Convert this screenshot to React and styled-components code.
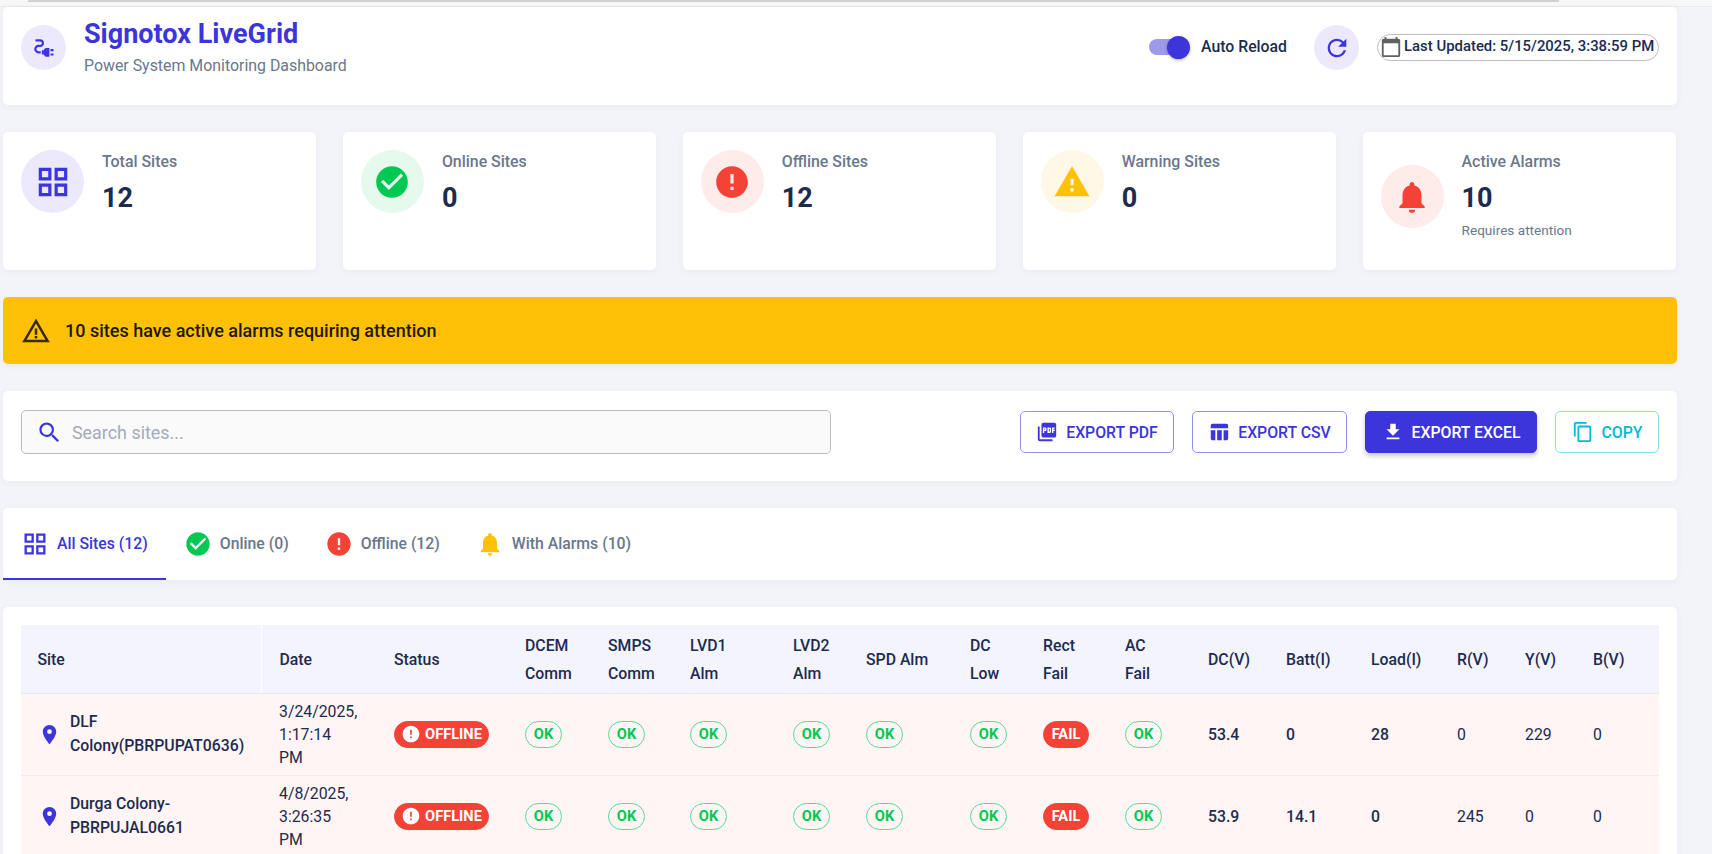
import React from 'react';
import styled, { createGlobalStyle } from 'styled-components';
import {
  MdElectricalServices, MdRefresh, MdCalendarToday, MdOutlineGridView, MdCheckCircle, MdError,
  MdWarning, MdNotifications, MdWarningAmber, MdSearch, MdPictureAsPdf, MdTableChart,
  MdFileDownload, MdContentCopy, MdLocationOn,
} from 'react-icons/md';

const primary = '#3c35dc';
const navy = '#1d2b4f';
const gray = '#6b778c';

const Global = createGlobalStyle`
  html, body { margin: 0; padding: 0; background: #f3f4f9; }
  * { box-sizing: border-box; }
  body { font-family: Roboto, "Liberation Sans", sans-serif; color: ${navy}; }
`;

const Page = styled.div`
  width: 1712px;
  height: 854px;
  overflow: hidden;
`;
const TopStrip = styled.div`
  height: 7px;
  background: #f7f7f7;
  border-bottom: 1px solid #e9e9e9;
  padding-left: 28px;
`;
const TopLine = styled.div`
  width: 1531px;
  height: 2px;
  background: #d2d2d2;
`;
const Content = styled.main`
  width: 1674px;
  margin-left: 3px;
  display: flex;
  flex-direction: column;
  gap: 27px;
`;
const Card = styled.section`
  background: #fff;
  border-radius: 5px;
  box-shadow: 0 2px 10px rgba(40, 50, 90, 0.04);
`;
const Header = styled(Card)`
  height: 98px;
  padding: 18px;
  display: flex;
  justify-content: space-between;
  align-items: flex-start;
`;
const Brand = styled.div`
  display: flex;
  align-items: flex-start;
  gap: 18px;
`;
const Round = styled.div`
  width: ${p => p.$size}px;
  height: ${p => p.$size}px;
  border-radius: 50%;
  flex: none;
  background: ${p => p.$bg};
  color: ${p => p.$fg};
  display: flex;
  align-items: center;
  justify-content: center;
`;
const Title = styled.h1`
  margin: -8px 0 0;
  font-size: 27px;
  line-height: 35px;
  font-weight: 700;
  color: ${primary};
`;
const Subtitle = styled.div`
  margin-top: 2px;
  font-size: 15.9px;
  line-height: 23px;
  color: ${gray};
`;
const Controls = styled.div`
  display: flex;
  align-items: center;
  height: 45px;
`;
const Switch = styled.div`
  position: relative;
  width: 38px;
  height: 16px;
  border-radius: 8px;
  background: #9e99ec;
  margin-right: 14px;
  margin-top: -1px;
`;
const Thumb = styled.div`
  position: absolute;
  right: -3px;
  top: -3.5px;
  width: 23px;
  height: 23px;
  border-radius: 50%;
  background: ${primary};
  box-shadow: 0 1px 3px rgba(0, 0, 0, 0.3);
`;
const SwitchLabel = styled.span`
  font-size: 15.8px;
  font-weight: 500;
  margin-right: 27px;
  margin-top: -2px;
`;
const UpdatedPill = styled.div`
  margin-left: 18px;
  width: 282px;
  height: 27px;
  margin-top: -1px;
  border: 1px solid #bdbdbd;
  border-radius: 14px;
  display: flex;
  align-items: center;
  gap: 2px;
  padding-left: 2px;
  color: #616161;
  overflow: visible;
`;
const UpdatedText = styled.span`
  font-size: 14.9px;
  font-weight: 500;
  color: ${navy};
  white-space: nowrap;
  margin-top: -2px;
`;
const StatGrid = styled.div`
  display: grid;
  grid-template-columns: repeat(5, 313.3px);
  gap: 26.6px;
`;
const StatCard = styled(Card)`
  height: 138px;
  padding: 18px;
  display: flex;
  align-items: flex-start;
`;
const StatRow = styled.div`
  display: flex;
  align-items: center;
  gap: 18px;
`;
const StatText = styled.div`
  display: flex;
  flex-direction: column;
  min-height: 63px;
`;
const StatLabel = styled.div`
  font-size: 15.9px;
  font-weight: 500;
  line-height: 23px;
  color: ${gray};
`;
const StatValue = styled.div`
  font-size: 27px;
  line-height: 30px;
  font-weight: 700;
  margin-top: 10px;
  color: ${navy};
`;
const StatNote = styled.div`
  font-size: 13.6px;
  line-height: 20px;
  margin: 7px 0 3px;
  color: ${gray};
`;
const Alert = styled.div`
  height: 67px;
  background: #ffc107;
  border-radius: 5px;
  padding-left: 18px;
  display: flex;
  align-items: center;
  gap: 14px;
  color: #3a2b00;
  box-shadow: 0 2px 6px rgba(40, 50, 90, 0.05);
`;
const AlertText = styled.span`
  font-size: 18px;
  font-weight: 500;
  margin-top: -1px;
  color: #1f1800;
`;
const Toolbar = styled(Card)`
  height: 90px;
  padding: 19px 18px;
  display: flex;
  justify-content: space-between;
  align-items: flex-start;
`;
const SearchBox = styled.div`
  width: 810px;
  height: 44px;
  border: 1px solid #bdbdbd;
  border-radius: 5px;
  background: #fafafa;
  display: flex;
  align-items: center;
  gap: 7px;
  padding-left: 14px;
  color: ${primary};
`;
const SearchInput = styled.input`
  border: 0;
  outline: 0;
  background: transparent;
  flex: 1;
  font: 400 17.9px Roboto, sans-serif;
  color: ${navy};
  &::placeholder { color: #a3abb9; opacity: 1; }
`;
const Actions = styled.div`
  display: flex;
  gap: 18px;
  margin-top: 1px;
`;
const ActionButton = styled.button`
  height: 42px;
  width: ${p => p.$w}px;
  border-radius: 5px;
  display: flex;
  align-items: center;
  justify-content: center;
  gap: 8px;
  padding: 0;
  font: 500 15.8px Roboto, sans-serif;
  text-transform: uppercase;
  background: ${p => (p.$filled ? primary : '#fff')};
  color: ${p => (p.$filled ? '#fff' : p.$color)};
  border: 1px solid ${p => (p.$filled ? primary : p.$border)};
  box-shadow: ${p => (p.$filled ? '0 3px 5px rgba(0,0,0,.22)' : 'none')};
`;
const TabsCard = styled(Card)`
  height: 72px;
  display: flex;
`;
const Tab = styled.div`
  height: 72px;
  padding: 1px 18px 0;
  display: flex;
  align-items: center;
  gap: 8px;
  font-size: 15.8px;
  font-weight: 500;
  color: ${p => (p.$active ? primary : gray)};
  border-bottom: 2px solid ${p => (p.$active ? primary : 'transparent')};
  white-space: nowrap;
`;
const TabIcon = styled.span`
  display: flex;
  color: ${p => p.$color};
`;
const TableCard = styled(Card)`
  padding: 18px;
  height: 300px;
`;
const Table = styled.table`
  width: 1638px;
  table-layout: fixed;
  border-collapse: collapse;
`;
const HeadCell = styled.th`
  background: #f3f4fd;
  height: 68px;
  padding: 2px 6px 0 18px;
  font-size: 15.8px;
  font-weight: 500;
  line-height: 27.5px;
  text-align: left;
  color: ${navy};
  white-space: pre-line;
  border-bottom: 1px solid #e9ebf2;
  &:first-child {
    padding-left: 16.5px;
    border-right: 1px solid #fff;
  }
`;
const Row = styled.tr`
  background: #fef5f4;
`;
const Cell = styled.td`
  height: 82px;
  padding: 0 6px 0 18px;
  font-size: 15.8px;
  line-height: 23px;
  font-weight: ${p => (p.$strong ? 500 : 400)};
  color: ${navy};
  border-bottom: 1px solid #eeeef2;
  white-space: pre-line;
`;
const SiteCell = styled.td`
  height: 82px;
  padding: 0 10px 0 17px;
  border-bottom: 1px solid #eeeef2;
`;
const SiteWrap = styled.div`
  display: flex;
  align-items: center;
  gap: 9px;
  color: ${primary};
`;
const SiteName = styled.span`
  font-size: 15.8px;
  line-height: 24.4px;
  font-weight: 500;
  color: ${navy};
`;
const Badge = styled.span`
  display: inline-flex;
  align-items: center;
  justify-content: center;
  vertical-align: middle;
  height: 27px;
  width: ${p => p.$w}px;
  border-radius: 13.5px;
  font-size: 14.6px;
  font-weight: 700;
  background: ${p => (p.$solid ? '#f44336' : 'transparent')};
  color: ${p => (p.$solid ? '#fff' : '#00c853')};
  border: 1px solid ${p => (p.$solid ? '#f44336' : '#5ad98f')};
  gap: 4px;
`;

const widths = [240, 115, 131, 83, 82, 103, 73, 104, 73, 82, 83, 78, 85, 86, 68, 68, 84];
const heads = ['Site', 'Date', 'Status', 'DCEM\nComm', 'SMPS\nComm', 'LVD1\nAlm', 'LVD2\nAlm', 'SPD Alm', 'DC\nLow', 'Rect\nFail', 'AC\nFail', 'DC(V)', 'Batt(I)', 'Load(I)', 'R(V)', 'Y(V)', 'B(V)'];
const rows = [
  { site: 'DLF Colony(PBRPUPAT0636)', date: '3/24/2025,\n1:17:14\nPM', dc: '53.4', batt: '0', load: '28', r: '0', y: '229', b: '0' },
  { site: 'Durga Colony-PBRPUJAL0661', date: '4/8/2025,\n3:26:35\nPM', dc: '53.9', batt: '14.1', load: '0', r: '245', y: '0', b: '0' },
];
const checks = ['ok', 'ok', 'ok', 'ok', 'ok', 'ok', 'fail', 'ok'];

const stats = [
  { label: 'Total Sites', value: '12', bg: '#ebe9fb', fg: primary, Icon: MdOutlineGridView },
  { label: 'Online Sites', value: '0', bg: '#e5f9ed', fg: '#00c853', Icon: MdCheckCircle },
  { label: 'Offline Sites', value: '12', bg: '#feecea', fg: '#f44336', Icon: MdError },
  { label: 'Warning Sites', value: '0', bg: '#fff8e6', fg: '#ffc107', Icon: MdWarning },
  { label: 'Active Alarms', value: '10', note: 'Requires attention', bg: '#feecea', fg: '#f44336', Icon: MdNotifications },
];
const tabs = [
  { label: 'All Sites (12)', Icon: MdOutlineGridView, color: primary, active: true },
  { label: 'Online (0)', Icon: MdCheckCircle, color: '#00c853' },
  { label: 'Offline (12)', Icon: MdError, color: '#f44336' },
  { label: 'With Alarms (10)', Icon: MdNotifications, color: '#ffc107' },
];

export default function App() {
  return (
    <Page>
      <Global />
      <TopStrip><TopLine /></TopStrip>
      <Content>
        <Header>
          <Brand>
            <Round $size={45} $bg="#ebe9fb" $fg={primary}><MdElectricalServices size={26} /></Round>
            <div>
              <Title>Signotox LiveGrid</Title>
              <Subtitle>Power System Monitoring Dashboard</Subtitle>
            </div>
          </Brand>
          <Controls>
            <Switch><Thumb /></Switch>
            <SwitchLabel>Auto Reload</SwitchLabel>
            <Round $size={45} $bg="#ebe9fb" $fg={primary}><MdRefresh size={28} /></Round>
            <UpdatedPill>
              <MdCalendarToday size={22} />
              <UpdatedText>Last Updated: 5/15/2025, 3:38:59 PM</UpdatedText>
            </UpdatedPill>
          </Controls>
        </Header>

        <StatGrid>
          {stats.map(({ label, value, note, bg, fg, Icon }) => (
            <StatCard key={label}>
              <StatRow>
                <Round $size={63} $bg={bg} $fg={fg}><Icon size={38} /></Round>
                <StatText>
                  <StatLabel>{label}</StatLabel>
                  <StatValue>{value}</StatValue>
                  {note && <StatNote>{note}</StatNote>}
                </StatText>
              </StatRow>
            </StatCard>
          ))}
        </StatGrid>

        <Alert>
          <MdWarningAmber size={30} />
          <AlertText>10 sites have active alarms requiring attention</AlertText>
        </Alert>

        <Toolbar>
          <SearchBox>
            <MdSearch size={27} />
            <SearchInput placeholder="Search sites..." />
          </SearchBox>
          <Actions>
            <ActionButton $w={154} $color={primary} $border="#9590ee"><MdPictureAsPdf size={22} />Export PDF</ActionButton>
            <ActionButton $w={155} $color={primary} $border="#9590ee"><MdTableChart size={22} />Export CSV</ActionButton>
            <ActionButton $w={172} $filled><MdFileDownload size={22} />Export Excel</ActionButton>
            <ActionButton $w={104} $color="#00bcd4" $border="#7fdfea"><MdContentCopy size={22} />Copy</ActionButton>
          </Actions>
        </Toolbar>

        <TabsCard>
          {tabs.map(({ label, Icon, color, active }) => (
            <Tab key={label} $active={active}>
              <TabIcon $color={color}><Icon size={28} /></TabIcon>
              {label}
            </Tab>
          ))}
        </TabsCard>

        <TableCard>
          <Table>
            <colgroup>{widths.map((w, i) => <col key={i} width={w} />)}</colgroup>
            <thead>
              <tr>{heads.map(h => <HeadCell key={h}>{h}</HeadCell>)}</tr>
            </thead>
            <tbody>
              {rows.map(r => (
                <Row key={r.site}>
                  <SiteCell>
                    <SiteWrap>
                      <MdLocationOn size={23} style={{ flex: 'none' }} />
                      <SiteName>{r.site}</SiteName>
                    </SiteWrap>
                  </SiteCell>
                  <Cell>{r.date}</Cell>
                  <Cell>
                    <Badge $solid $w={95}><MdError size={20} />OFFLINE</Badge>
                  </Cell>
                  {checks.map((c, i) => (
                    <Cell key={i}>
                      {c === 'ok' ? <Badge $w={37}>OK</Badge> : <Badge $solid $w={46}>FAIL</Badge>}
                    </Cell>
                  ))}
                  <Cell $strong>{r.dc}</Cell>
                  <Cell $strong>{r.batt}</Cell>
                  <Cell $strong>{r.load}</Cell>
                  <Cell>{r.r}</Cell>
                  <Cell>{r.y}</Cell>
                  <Cell>{r.b}</Cell>
                </Row>
              ))}
            </tbody>
          </Table>
        </TableCard>
      </Content>
    </Page>
  );
}
